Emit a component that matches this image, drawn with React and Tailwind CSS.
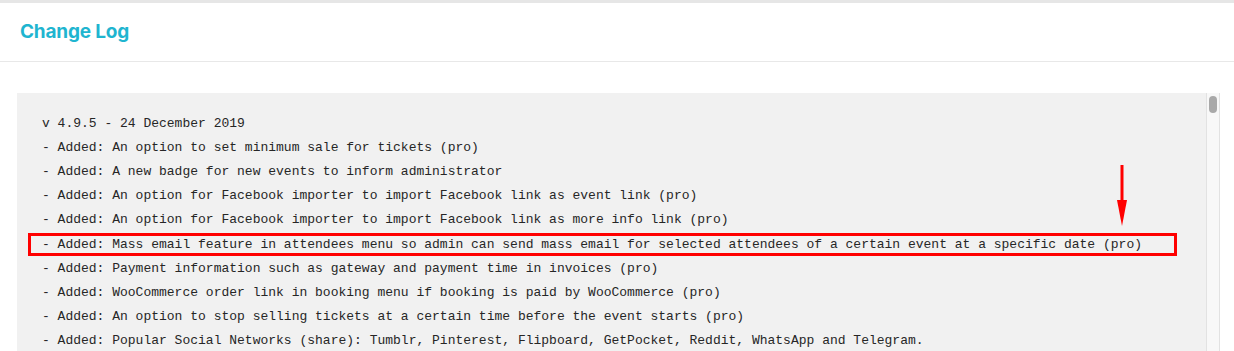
import React from "react";

const lines = [
  "v 4.9.5 - 24 December 2019",
  "- Added: An option to set minimum sale for tickets (pro)",
  "- Added: A new badge for new events to inform administrator",
  "- Added: An option for Facebook importer to import Facebook link as event link (pro)",
  "- Added: An option for Facebook importer to import Facebook link as more info link (pro)",
  "- Added: Mass email feature in attendees menu so admin can send mass email for selected attendees of a certain event at a specific date (pro)",
  "- Added: Payment information such as gateway and payment time in invoices (pro)",
  "- Added: WooCommerce order link in booking menu if booking is paid by WooCommerce (pro)",
  "- Added: An option to stop selling tickets at a certain time before the event starts (pro)",
  "- Added: Popular Social Networks (share): Tumblr, Pinterest, Flipboard, GetPocket, Reddit, WhatsApp and Telegram.",
];

const HIGHLIGHT = 5;

const App = () => {
  return (
    <div className="w-[1234px] h-[351px] overflow-hidden bg-white">
      {/* top strip */}
      <div className="h-[3px] bg-[#e6e6e6]" />

      {/* header */}
      <div className="h-[59px] flex items-center px-[20px] border-b border-[#e8e8e8]">
        <h2 className="text-[19px] font-bold text-[#1fb5d0] font-['Inter',sans-serif] -tracking-[0.2px]">
          Change Log
        </h2>
      </div>

      {/* change log box */}
      <div className="pt-[31px] pl-[17px] pr-[14px]">
        <div className="relative flex bg-[#f1f1f1]">
          <div className="flex-1 pt-[19px] pl-[25px] font-['Liberation_Mono',monospace] text-[13px] leading-[24px] text-[#262626] whitespace-pre">
            {lines.map((line, i) =>
              i === HIGHLIGHT ? (
                <div
                  key={i}
                  className="-ml-[14px] pl-[11px] w-[1149px] border-[3px] border-[#ff0000] leading-[17px] my-[1px]"
                >
                  {line}
                </div>
              ) : (
                <div key={i}>{line}</div>
              )
            )}
          </div>

          {/* scrollbar */}
          <div className="w-[14px] shrink-0 bg-[#f8f8f8] border-l border-r border-[#e2e2e2] pt-[3px] flex justify-center">
            <div className="w-[8px] h-[17px] rounded-full bg-[#a9a9a9]" />
          </div>

          {/* annotation arrow */}
          <svg
            className="absolute left-[1096px] top-[70px]"
            width="18"
            height="64"
            viewBox="0 0 18 64"
          >
            <line x1="9" y1="2" x2="9" y2="42" stroke="#ff0000" strokeWidth="3" />
            <polygon points="4,37 14,37 9,63" fill="#ff0000" />
          </svg>
        </div>
      </div>
    </div>
  );
};

export default App;
